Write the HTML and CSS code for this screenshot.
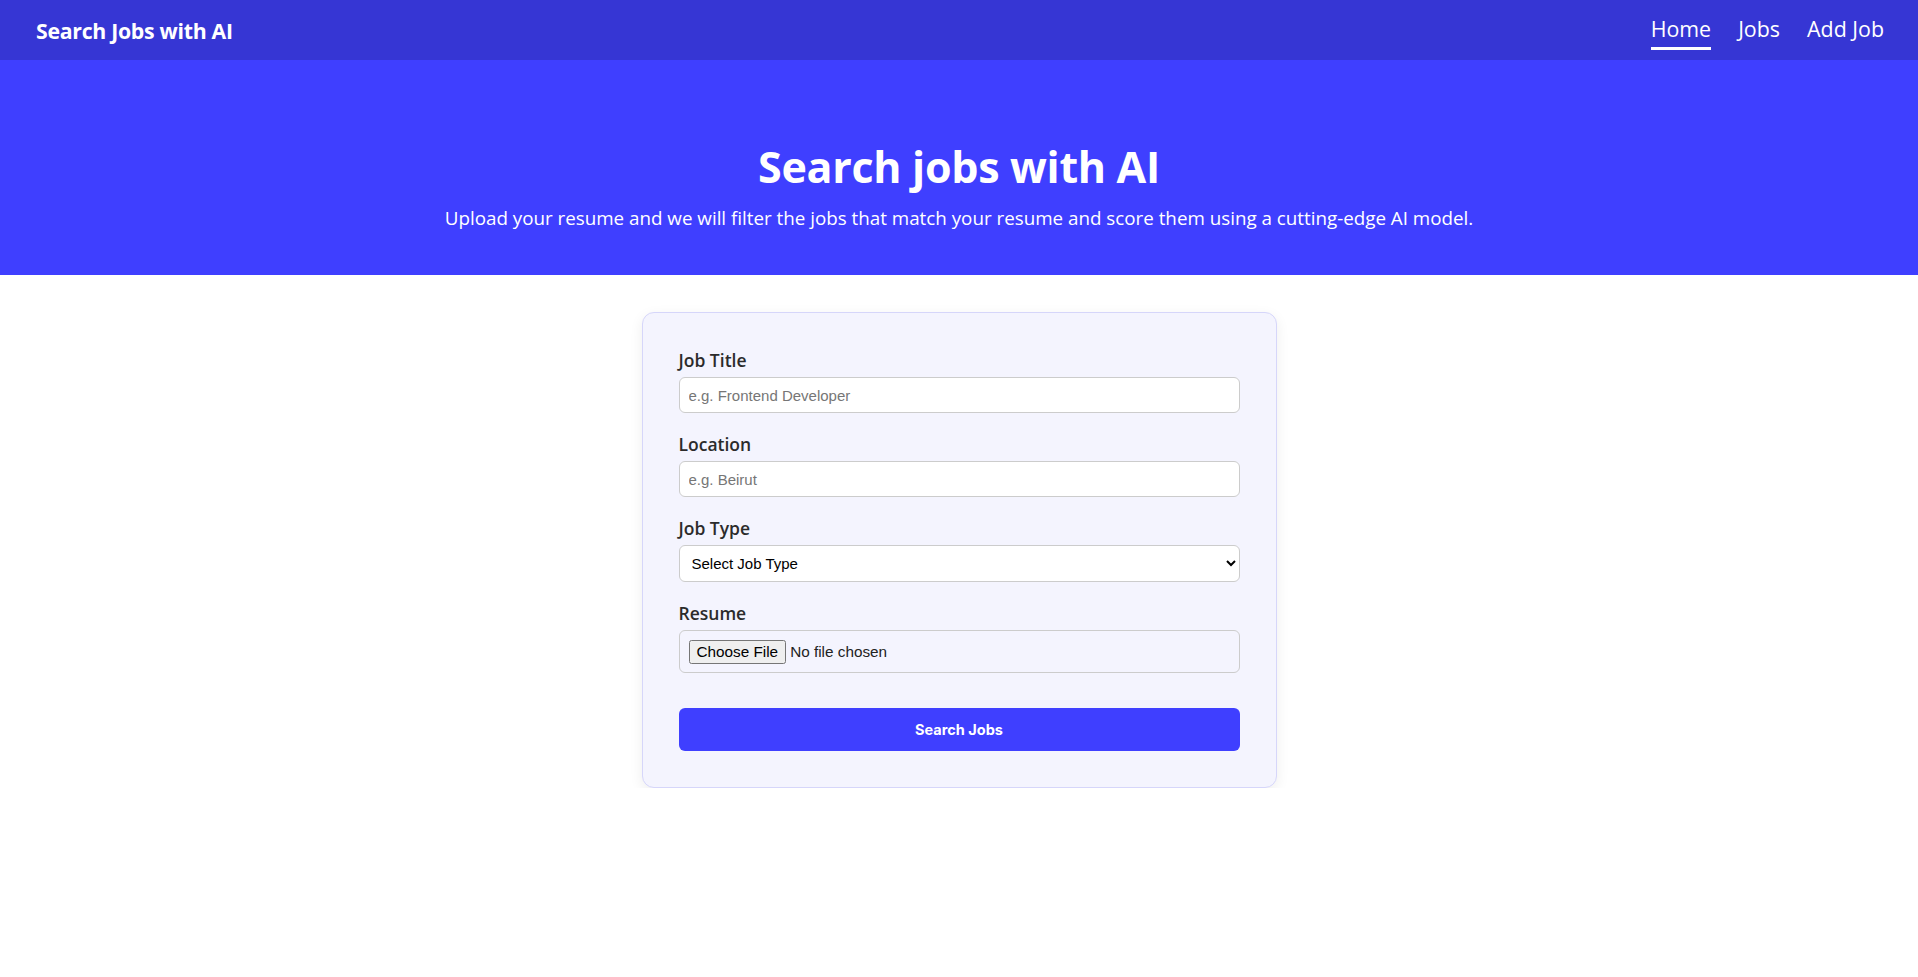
FILE: index.html
```html
<!DOCTYPE html>
<html lang="en">
<head>
<meta charset="utf-8">
<title>Search Jobs with AI</title>
<link rel="stylesheet" href="styles.css">
</head>
<body>
<header class="navbar">
  <a class="brand" href="#">Search Jobs with AI</a>
  <nav class="nav-links">
    <a class="nav-link active" href="#">Home</a>
    <a class="nav-link" href="#">Jobs</a>
    <a class="nav-link" href="#">Add Job</a>
  </nav>
</header>
<section class="hero">
  <h1 class="hero-title">Search jobs with AI</h1>
  <p class="hero-sub">Upload your resume and we will filter the jobs that match your resume and score them using a cutting-edge AI model.</p>
</section>
<main class="main">
  <form class="card">
    <div class="form-group">
      <label class="label" for="title">Job Title</label>
      <input class="input" id="title" type="text" placeholder="e.g. Frontend Developer">
    </div>
    <div class="form-group">
      <label class="label" for="loc">Location</label>
      <input class="input" id="loc" type="text" placeholder="e.g. Beirut">
    </div>
    <div class="form-group">
      <label class="label" for="type">Job Type</label>
      <select class="select" id="type">
        <option>Select Job Type</option>
        <option>Full-time</option>
        <option>Part-time</option>
      </select>
    </div>
    <div class="form-group">
      <label class="label" for="resume">Resume</label>
      <input class="file" id="resume" type="file">
    </div>
    <button class="submit" type="button">Search Jobs</button>
  </form>
</main>
</body>
</html>
```
FILE: styles.css
```css
* { box-sizing: border-box; }
body {
  margin: 0;
  font-family: "Open Sans", "Noto Sans", sans-serif;
  background: #ffffff;
  color: #222;
}
.navbar {
  height: 60px;
  background: #3636d4;
  display: flex;
  align-items: center;
  justify-content: space-between;
  padding: 0 34px 0 36px;
}
.brand {
  color: #fff;
  text-decoration: none;
  font-weight: 700;
  font-size: 21.3px;
  letter-spacing: -0.3px;
}
.nav-links {
  display: flex;
  gap: 27px;
  align-items: center;
}
.nav-link {
  color: #fff;
  text-decoration: none;
  font-size: 21.4px;
  line-height: 26px;
  padding-top: 6px;
  padding-bottom: 5px;
  border-bottom: 3px solid transparent;
}
.nav-link.active { border-bottom-color: #fff; }
.hero {
  background: #3f3fff;
  color: #fff;
  height: 215px;
  display: flex;
  flex-direction: column;
  align-items: center;
  padding-top: 80px;
}
.hero-title {
  margin: 0;
  font-size: 43px;
  line-height: 54px;
  font-weight: 700;
  letter-spacing: -0.3px;
}
.hero-sub {
  margin: 11px 0 0;
  font-size: 18.8px;
  line-height: 26px;
}
.main {
  padding-top: 37px;
}
.card {
  width: 635px;
  margin: 0 auto;
  background: #f4f4fe;
  border: 1px solid #d6d6fa;
  border-radius: 12px;
  padding: 36px;
  box-shadow: 0 4px 14px rgba(0, 0, 0, 0.07);
}
.form-group {
  display: flex;
  flex-direction: column;
  margin-bottom: 20px;
}
.form-group:last-of-type { margin-bottom: 0; }
.label {
  font-size: 17.5px;
  line-height: 22px;
  font-weight: 600;
  color: #2b2b2b;
  margin-bottom: 6px;
}
.input, .select {
  font-family: "Liberation Sans", Arial, sans-serif;
  border: 1px solid #cccccc;
  border-radius: 6px;
  background: #fff;
  width: 100%;
}
.input {
  height: 36px;
  padding: 0 9px;
  font-size: 15px;
  color: #222;
}
.input::placeholder { color: #767676; }
.select {
  height: 37px;
  padding: 0 8px;
  font-size: 15px;
  color: #000;
}
.file {
  font-family: "Liberation Sans", Arial, sans-serif;
  font-size: 15.3px;
  height: 43px;
  padding: 9px;
  border: 1px solid #cccccc;
  border-radius: 6px;
  width: 100%;
}
.submit {
  display: block;
  width: 100%;
  height: 43px;
  margin-top: 35px;
  border: none;
  border-radius: 6px;
  background: #3f3fff;
  color: #fff;
  font-family: Inter, "Noto Sans", sans-serif;
  font-weight: 700;
  font-size: 14.5px;
}
```
